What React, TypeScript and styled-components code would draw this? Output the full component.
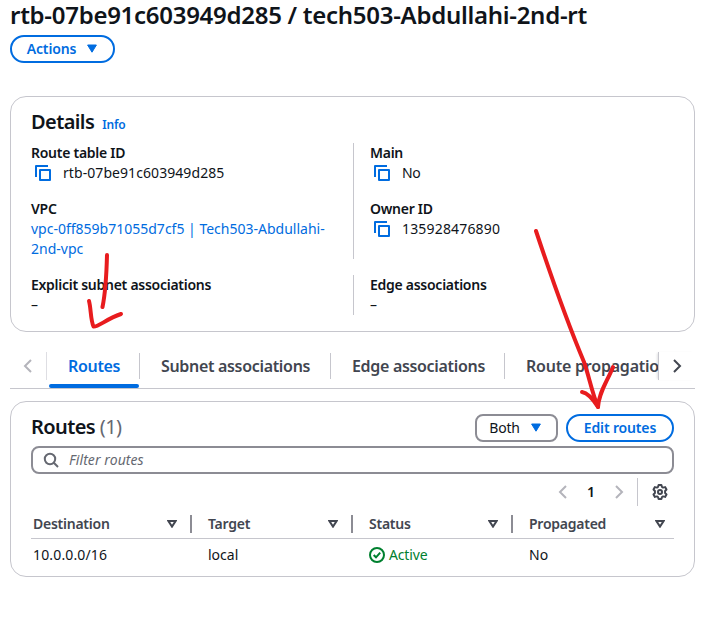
import React from 'react';
import styled, { createGlobalStyle, css } from 'styled-components';

const color = {
  text: '#0f141a',
  label: '#424650',
  muted: '#656871',
  link: '#006ce0',
  line: '#c6c6cd',
  control: '#8c8c94',
  disabled: '#b4b4bb',
  success: '#00802f',
  ink: '#e81c1e',
};

const GlobalStyle = createGlobalStyle`
  * { box-sizing: border-box; }
  body {
    margin: 0;
    background: #fff;
    color: ${color.text};
    font: 400 14px/20px "Noto Sans", "Open Sans", sans-serif;
    overflow: hidden;
  }
  svg { display: block; flex: none; }
`;

const Page = styled.main`
  position: relative;
  width: 704px;
  height: 644px;
  padding: 0 9px 0 10px;
`;

const Title = styled.h1`
  margin: 0 0 6px;
  font-size: 24px;
  line-height: 29px;
  font-weight: 600;
  letter-spacing: -0.28px;
  white-space: nowrap;
`;

const Button = styled.button<{ $width: number; $variant?: 'select' }>`
  display: flex;
  align-items: center;
  justify-content: center;
  gap: 10px;
  width: ${(p) => p.$width}px;
  height: 28px;
  padding: 0;
  background: #fff;
  border: 2px solid ${color.link};
  border-radius: 14px;
  color: ${color.link};
  font: 600 14px/20px "Noto Sans", sans-serif;
  letter-spacing: -0.15px;
  ${(p) =>
    p.$variant === 'select' &&
    css`
      border-color: ${color.control};
      border-radius: 8px;
      color: ${color.text};
      font-weight: 400;
      letter-spacing: -0.25px;
      padding-right: 2px;
    `}
`;

const Card = styled.section`
  border: 1px solid ${color.line};
  border-radius: 16px;
  padding: 0 20px;
`;

const DetailsCard = styled(Card)`
  height: 236px;
  margin-top: 33px;
  padding-top: 12px;
`;

const RoutesCard = styled(Card)`
  height: 176px;
  margin-top: 12px;
  padding-top: 12px;
`;

const HeadingRow = styled.header`
  display: flex;
  align-items: baseline;
  gap: 8px;
  height: 25px;
  margin-bottom: 9px;
`;

const Heading = styled.h2`
  margin: 0;
  font-size: 20px;
  line-height: 25px;
  font-weight: 600;
  letter-spacing: -0.6px;
`;

const Count = styled.span`
  font-weight: 400;
  letter-spacing: -0.5px;
  color: ${color.muted};
`;

const InfoLink = styled.a`
  font-size: 12px;
  line-height: 16px;
  font-weight: 600;
  letter-spacing: -0.15px;
  color: ${color.link};
`;

const DetailGroup = styled.div`
  display: grid;
  grid-template-columns: 322px 1fr;
  & + & { margin-top: 16px; }
`;

const DetailColumn = styled.dl`
  display: flex;
  flex-direction: column;
  gap: 16px;
  margin: 0;
  & + & {
    padding-left: 16px;
    border-left: 1px solid ${color.line};
  }
`;

const Term = styled.dt`
  font-weight: 600;
  letter-spacing: -0.27px;
`;

const Value = styled.dd<{ $tracking?: number }>`
  display: flex;
  align-items: center;
  gap: 12px;
  margin: 0;
  letter-spacing: ${(p) => p.$tracking ?? 0}px;
`;

const CopyIconBox = styled.span`
  padding-left: 4px;
`;

const ResourceLink = styled.a`
  color: ${color.link};
`;

const TabBar = styled.nav`
  display: flex;
  align-items: center;
  height: 57px;
  padding-top: 12px;
  border-bottom: 1px solid ${color.line};
`;

const Scroller = styled.button<{ $side: 'left' | 'right' }>`
  display: flex;
  align-items: center;
  justify-content: center;
  width: 37px;
  height: 28px;
  padding: 0;
  border: 0;
  background: #fff;
  flex: none;
  ${(p) =>
    p.$side === 'left'
      ? css`
          border-right: 1px solid #dedee3;
          color: ${color.disabled};
        `
      : css`
          border-left: 1px solid ${color.line};
          box-shadow: -2px 0 2px -1px rgba(0, 7, 22, 0.12);
          color: ${color.label};
        `}
`;

const TabList = styled.div`
  display: flex;
  flex: 1;
  min-width: 0;
  height: 44px;
  overflow: hidden;
`;

const TabItem = styled.div<{ $width: number; $active?: boolean }>`
  display: flex;
  flex-direction: column;
  justify-content: space-between;
  flex: none;
  width: ${(p) => p.$width}px;
  height: 44px;
  padding: 9px 0 0;
  color: ${(p) => (p.$active ? color.link : color.label)};
`;

const TabLabel = styled.div`
  height: 26px;
  padding-left: 21px;
  border-right: 1px solid ${color.line};
  font-size: 16px;
  line-height: 27px;
  font-weight: 600;
  letter-spacing: -0.32px;
  white-space: nowrap;
  ${TabItem}:last-child & { letter-spacing: -0.22px; }
`;

const TabMarker = styled.div`
  width: 90px;
  height: 4px;
  margin-left: 2px;
  border-radius: 2px;
  background: ${color.link};
`;

const RoutesHeader = styled.header`
  display: flex;
  gap: 8px;
  height: 28px;
  margin-bottom: 4px;
`;

const Spacer = styled.div`
  flex: 1;
`;

const Search = styled.label`
  display: flex;
  align-items: center;
  gap: 10px;
  height: 28px;
  padding-left: 10px;
  border: 2px solid ${color.control};
  border-radius: 8px;
  color: ${color.muted};
  font-style: italic;
  letter-spacing: 0.08px;
`;

const Pager = styled.div`
  display: flex;
  align-items: center;
  justify-content: flex-end;
  height: 28px;
  margin-top: 4px;
  color: ${color.disabled};
`;

const PageNumber = styled.span`
  width: 40px;
  text-align: center;
  color: ${color.text};
  font-weight: 600;
`;

const Preferences = styled.span`
  display: flex;
  align-items: center;
  height: 28px;
  margin-left: 10px;
  padding: 0 6px 0 14px;
  border-left: 1px solid ${color.line};
  color: ${color.label};
`;

const TableRow = styled.div`
  display: grid;
  grid-template-columns: 161px 161px 160px 161px;
  height: 36px;
  padding-top: 6px;
`;

const HeaderRow = styled(TableRow)`
  height: 29px;
  margin-top: 4px;
  padding-top: 0;
  align-items: center;
  border-bottom: 1px solid ${color.line};
`;

const HeaderCell = styled.div`
  display: flex;
  align-items: center;
  justify-content: space-between;
  height: 18px;
  padding: 0 13px 0 16px;
  border-right: 2px solid ${color.control};
  color: ${color.label};
  font-weight: 600;
  letter-spacing: -0.25px;
  &:first-child { padding-left: 2px; }
  &:last-child {
    padding-right: 9px;
    border-right: 0;
  }
`;

const Cell = styled.div<{ $tracking?: number }>`
  padding-left: 16px;
  letter-spacing: ${(p) => p.$tracking ?? 0}px;
  &:first-child { padding-left: 2px; }
`;

const Status = styled.span`
  display: flex;
  align-items: center;
  gap: 4px;
  color: ${color.success};
  letter-spacing: -0.15px;
`;

const Annotation = styled.svg`
  position: absolute;
  inset: 0;
  pointer-events: none;
`;

const Caret = () => (
  <svg width="12" height="10" viewBox="0 0 12 10">
    <path d="M1.6 1h8.8L6 8.2z" fill={color.link} stroke={color.link} strokeWidth="1" />
  </svg>
);

const SortIcon = () => (
  <svg width="10" height="8" viewBox="0 0 10 8">
    <path d="M1.4 1h7.2L5 6.6z" fill="none" stroke={color.label} strokeWidth="2" />
  </svg>
);

const CopyIcon = () => (
  <CopyIconBox>
    <svg width="16" height="16" viewBox="0 0 16 16" fill="none" stroke={color.link} strokeWidth="2" strokeLinejoin="round">
      <path d="M1 12V1h12" />
      <path d="M5 5h10v10H5z" />
    </svg>
  </CopyIconBox>
);

const Chevron = ({ flip }: { flip?: boolean }) => (
  <svg width="16" height="16" viewBox="0 0 16 16" fill="none" stroke="currentColor" strokeWidth="2">
    <path d={flip ? 'M5 2l6 6-6 6' : 'M11 2L5 8l6 6'} />
  </svg>
);

const SearchIcon = () => (
  <svg width="16" height="16" viewBox="0 0 16 16" fill="none" stroke={color.muted} strokeWidth="2">
    <circle cx="7" cy="7" r="5.2" />
    <path d="M10.8 10.8l4.2 4.2" />
  </svg>
);

const GearIcon = () => (
  <svg width="16" height="16" viewBox="0 0 16 16" fill="none" stroke="currentColor" strokeWidth="2" strokeLinejoin="round">
    <path d="M6.6 1h2.8l.6 2 1 .6 2.1-.5 1.4 2.4L13.100 7v2l1.400 1.500-1.400 2.400-2.100-.5-1 .6-.6 2H6.600L6 13l-1-.6-2.100.5-1.400-2.400L2.900 9V7L1.500 5.500l1.400-2.400L5 3.600 6 3z" />
    <circle cx="8" cy="8" r="2" />
  </svg>
);

const SuccessIcon = () => (
  <svg width="16" height="16" viewBox="0 0 16 16" fill="none" stroke={color.success} strokeWidth="2">
    <circle cx="8" cy="8" r="7" />
    <path d="M4.7 8L7 10.3l4.200-4.600" />
  </svg>
);

const tabs = [
  { label: 'Routes', width: 93, active: true },
  { label: 'Subnet associations', width: 191 },
  { label: 'Edge associations', width: 174 },
  { label: 'Route propagation', width: 190 },
];

const columns = ['Destination', 'Target', 'Status', 'Propagated'];

export default function App() {
  return (
    <Page>
      <GlobalStyle />
      <Title>rtb-07be91c603949d285 / tech503-Abdullahi-2nd-rt</Title>
      <Button $width={105}>
        Actions <Caret />
      </Button>

      <DetailsCard>
        <HeadingRow>
          <Heading>Details</Heading>
          <InfoLink>Info</InfoLink>
        </HeadingRow>
        <DetailGroup>
          <DetailColumn>
            <div>
              <Term>Route table ID</Term>
              <Value $tracking={0.07}>
                <CopyIcon />
                rtb-07be91c603949d285
              </Value>
            </div>
            <div>
              <Term>VPC</Term>
              <Value>
                <ResourceLink>
                  vpc-0ff859b71055d7cf5 | Tech503-Abdullahi-
                  <br />
                  2nd-vpc
                </ResourceLink>
              </Value>
            </div>
          </DetailColumn>
          <DetailColumn>
            <div>
              <Term>Main</Term>
              <Value $tracking={-0.3}>
                <CopyIcon />
                No
              </Value>
            </div>
            <div>
              <Term>Owner ID</Term>
              <Value $tracking={0.17}>
                <CopyIcon />
                135928476890
              </Value>
            </div>
          </DetailColumn>
        </DetailGroup>
        <DetailGroup>
          <DetailColumn>
            <div>
              <Term>Explicit subnet associations</Term>
              <Value>–</Value>
            </div>
          </DetailColumn>
          <DetailColumn>
            <div>
              <Term>Edge associations</Term>
              <Value>–</Value>
            </div>
          </DetailColumn>
        </DetailGroup>
      </DetailsCard>

      <TabBar>
        <Scroller $side="left">
          <Chevron />
        </Scroller>
        <TabList>
          {tabs.map((tab) => (
            <TabItem key={tab.label} $width={tab.width} $active={tab.active}>
              <TabLabel>{tab.label}</TabLabel>
              {tab.active && <TabMarker />}
            </TabItem>
          ))}
        </TabList>
        <Scroller $side="right">
          <Chevron flip />
        </Scroller>
      </TabBar>

      <RoutesCard>
        <RoutesHeader>
          <Heading>
            Routes <Count>(1)</Count>
          </Heading>
          <Spacer />
          <Button $width={83} $variant="select">
            Both <Caret />
          </Button>
          <Button $width={108}>Edit routes</Button>
        </RoutesHeader>
        <Search>
          <SearchIcon />
          Filter routes
        </Search>
        <Pager>
          <Chevron />
          <PageNumber>1</PageNumber>
          <Chevron flip />
          <Preferences>
            <GearIcon />
          </Preferences>
        </Pager>
        <HeaderRow>
          {columns.map((name) => (
            <HeaderCell key={name}>
              {name}
              <SortIcon />
            </HeaderCell>
          ))}
        </HeaderRow>
        <TableRow>
          <Cell $tracking={0.15}>10.0.0.0/16</Cell>
          <Cell>local</Cell>
          <Cell>
            <Status>
              <SuccessIcon />
              Active
            </Status>
          </Cell>
          <Cell>No</Cell>
        </TableRow>
      </RoutesCard>

      <Annotation width="704" height="644" viewBox="0 0 704 644" fill="none" stroke={color.ink} strokeWidth="4" strokeLinecap="round" strokeLinejoin="round">
        <path d="M107 255C106.500 275 106 290 102.500 307" />
        <path d="M89 301C91 308 90.500 320 93.500 326.500C98 327.500 106 319 121 314" />
        <path d="M536 231C552 279 568 324 584 362C589 376 592 393 598 407" />
        <path d="M582 392C588 393 593 399 598 407C599 392 607 382 613 367" />
      </Annotation>
    </Page>
  );
}
